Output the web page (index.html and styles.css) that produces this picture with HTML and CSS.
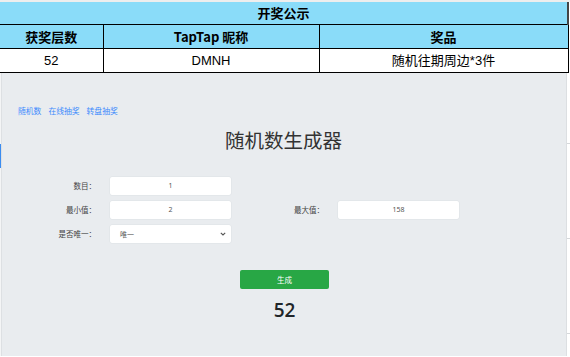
FILE: index.html
```html
<!DOCTYPE html>
<html lang="zh">
<head>
<meta charset="utf-8">
<title>开奖公示</title>
<link rel="stylesheet" href="styles.css">
</head>
<body>
<div class="topline"></div>
<table class="award">
  <colgroup><col class="c1"><col class="c2"><col class="c3"></colgroup>
  <tr class="title-row"><th colspan="3">开奖公示</th></tr>
  <tr class="head-row"><th>获奖层数</th><th>TapTap 昵称</th><th>奖品</th></tr>
  <tr class="data-row"><td>52</td><td>DMNH</td><td>随机往期周边*3件</td></tr>
</table>
<div class="frame">
  <div class="edge-left"><span class="edge-mark"></span></div>
  <div class="panel">
    <nav class="links">
      <a href="#">随机数</a>
      <a href="#">在线抽奖</a>
      <a href="#">转盘抽奖</a>
    </nav>
    <h1 class="heading">随机数生成器</h1>
    <div class="form">
      <label class="lbl">数目：</label>
      <div class="field">1</div>
      <span></span><span></span>
      <label class="lbl">最小值：</label>
      <div class="field">2</div>
      <label class="lbl">最大值：</label>
      <div class="field">158</div>
      <label class="lbl">是否唯一：</label>
      <div class="field select"><span>唯一</span>
        <svg class="chev" width="6" height="4" viewBox="0 0 6 4"><path d="M0.8 0.8 L3 3 L5.2 0.8" fill="none" stroke="#555" stroke-width="1.1"/></svg>
      </div>
    </div>
    <div class="actions"><button class="btn">生成</button></div>
    <div class="result">52</div>
  </div>
  <div class="edge-right"></div>
</div>
</body>
</html>
```
FILE: styles.css
```css
html, body {
  margin: 0;
  padding: 0;
  height: 357px;
  overflow: hidden;
  background: #ffffff;
  font-family: "Noto Sans CJK SC", "Noto Sans", sans-serif;
}
.topline {
  height: 2px;
  background: #eeeeee;
}
.award {
  border-collapse: collapse;
  table-layout: fixed;
  width: 568px;
  font-size: 13px;
  color: #000;
}
.award .c1 { width: 103px; }
.award .c2 { width: 216px; }
.award .c3 { width: 249px; }
.award th, .award td {
  border: 1px solid #000;
  text-align: center;
  padding: 0;
  line-height: 16px;
}
.award th { font-weight: 700; }
.award td { font-family: "Liberation Sans", "Noto Sans CJK SC", sans-serif; font-weight: 400; }
.title-row th {
  height: 22px;
  background: #8adcf9;
  border-top: none;
  border-left: none;
  border-right: 2px solid #444;
}
.head-row th {
  height: 23px;
  background: #8adcf9;
  border-left: none;
}
.head-row th:first-child, .data-row td:first-child { border-left: none; }
.data-row td {
  height: 23px;
  background: #fff;
}
.frame {
  display: flex;
  height: 283px;
}
.edge-left {
  width: 1px;
  background: #f4f5f6;
  border-right: 1px solid #dde0e3;
  position: relative;
}
.edge-mark {
  position: absolute;
  left: 0;
  top: 71px;
  width: 1px;
  height: 24px;
  background: #3b8cf0;
}
.edge-right {
  width: 3px;
  background: #ffffff;
  border-left: 1px solid #dcdfe2;
  background-image: repeating-linear-gradient(to bottom, transparent 0, transparent 70px, #d5d8db 70px, #d5d8db 71px, transparent 71px, transparent 95px);
}
.panel {
  flex: 1;
  background: #e9ecef;
  padding-top: 33px;
  color: #555;
}
.links {
  display: flex;
  gap: 7px;
  padding-left: 16px;
  height: 10px;
  line-height: 10px;
  font-size: 7.8px;
}
.links a {
  color: #3d8bfd;
  text-decoration: none;
}
.heading {
  margin: 12px 0 0;
  text-align: center;
  font-size: 19.5px;
  line-height: 24px;
  font-weight: 400;
  color: #333;
  padding-right: 1px;
}
.form {
  margin-top: 25px;
  display: grid;
  grid-template-columns: 108px 121px 107px 121px;
  grid-auto-rows: 18px;
  row-gap: 6px;
}
.lbl {
  text-align: right;
  padding-right: 14px;
  font-size: 7.5px;
  line-height: 18px;
  color: #444;
}
.field {
  background: #fff;
  border-radius: 2px;
  box-shadow: 0 0 0 0.5px #dde1e5;
  text-align: center;
  font-family: "Noto Sans", sans-serif;
  font-size: 7px;
  line-height: 18px;
  color: #555;
}
.field.select {
  display: flex;
  align-items: center;
  justify-content: space-between;
  padding: 0 5px 0 10px;
  font-family: "Noto Sans CJK SC", sans-serif;
  font-size: 7px;
}
.actions {
  margin-top: 27px;
  display: flex;
  justify-content: center;
  padding-left: 1px;
}
.btn {
  width: 89px;
  height: 19px;
  border: none;
  border-radius: 2px;
  background: #28a745;
  color: #fff;
  font-family: "Noto Sans CJK SC", sans-serif;
  font-size: 7.5px;
  padding: 0;
}
.result {
  margin-top: 9px;
  text-align: center;
  font-family: "Open Sans", "Noto Sans", sans-serif;
  font-size: 19px;
  font-weight: 600;
  line-height: 24px;
  color: #212529;
  padding-left: 1px;
}
```
